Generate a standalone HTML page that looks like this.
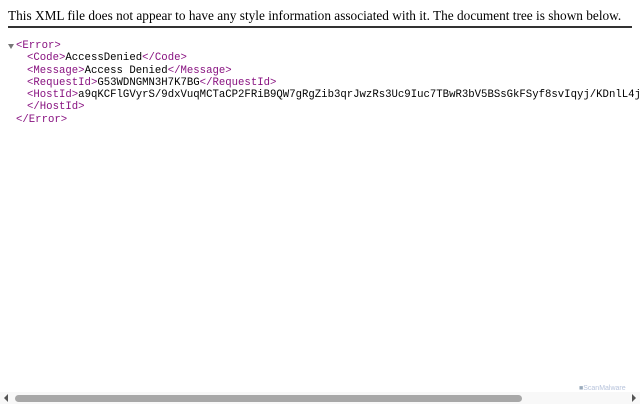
<html><head><style>
body{margin:0;width:640px;height:404px;overflow:hidden;background:#fff;position:relative}
.hdr{position:absolute;left:8px;top:8px;font:13.3px "Liberation Serif",serif;color:#000;white-space:nowrap}
.line{position:absolute;left:8px;top:26px;width:624px;height:2px;background:#333}
.l{position:absolute;font:10.67px/12px "Liberation Mono",monospace;white-space:pre;color:#000}
.t{color:#881280}
.sb{position:absolute;left:0;top:392px;width:640px;height:12px;background:#f8f8f8}
.th{position:absolute;left:15px;top:395px;width:507px;height:7px;border-radius:4px;background:#a8a8a8}
</style></head><body>
<div class="hdr">This XML file does not appear to have any style information associated with it. The document tree is shown below.</div>
<div class="line"></div>
<div style="position:absolute;left:8px;top:44px;width:0;height:0;border-left:3px solid transparent;border-right:3px solid transparent;border-top:5px solid #777"></div>
<div class="l" style="left:16px;top:40px"><span class="t">&lt;Error&gt;</span></div>
<div class="l" style="left:27px;top:52px"><span class="t">&lt;Code&gt;</span>AccessDenied<span class="t">&lt;/Code&gt;</span></div>
<div class="l" style="left:27px;top:65px"><span class="t">&lt;Message&gt;</span>Access Denied<span class="t">&lt;/Message&gt;</span></div>
<div class="l" style="left:27px;top:77px"><span class="t">&lt;RequestId&gt;</span>G53WDNGMN3H7K7BG<span class="t">&lt;/RequestId&gt;</span></div>
<div class="l" style="left:27px;top:89px"><span class="t">&lt;HostId&gt;</span>a9qKCFlGVyrS/9dxVuqMCTaCP2FRiB9QW7gRgZib3qrJwzRs3Uc9Iuc7TBwR3bV5BSsGkFSyf8svIqyj/KDnlL4j</div>
<div class="l" style="left:27px;top:101px"><span class="t">&lt;/HostId&gt;</span></div>
<div class="l" style="left:16px;top:114px"><span class="t">&lt;/Error&gt;</span></div>
<div class="sb"></div><div class="th"></div>
<div style="position:absolute;left:4px;top:394px;width:0;height:0;border-top:4px solid transparent;border-bottom:4px solid transparent;border-right:4px solid #555"></div>
<div style="position:absolute;left:632px;top:394px;width:0;height:0;border-top:4px solid transparent;border-bottom:4px solid transparent;border-left:4px solid #555"></div>
<div style="position:absolute;left:579px;top:385px;font:7px 'Liberation Sans',sans-serif;color:#b8c4dc"><span style="color:#9ab">■</span>ScanMalware</div>
</body></html>
